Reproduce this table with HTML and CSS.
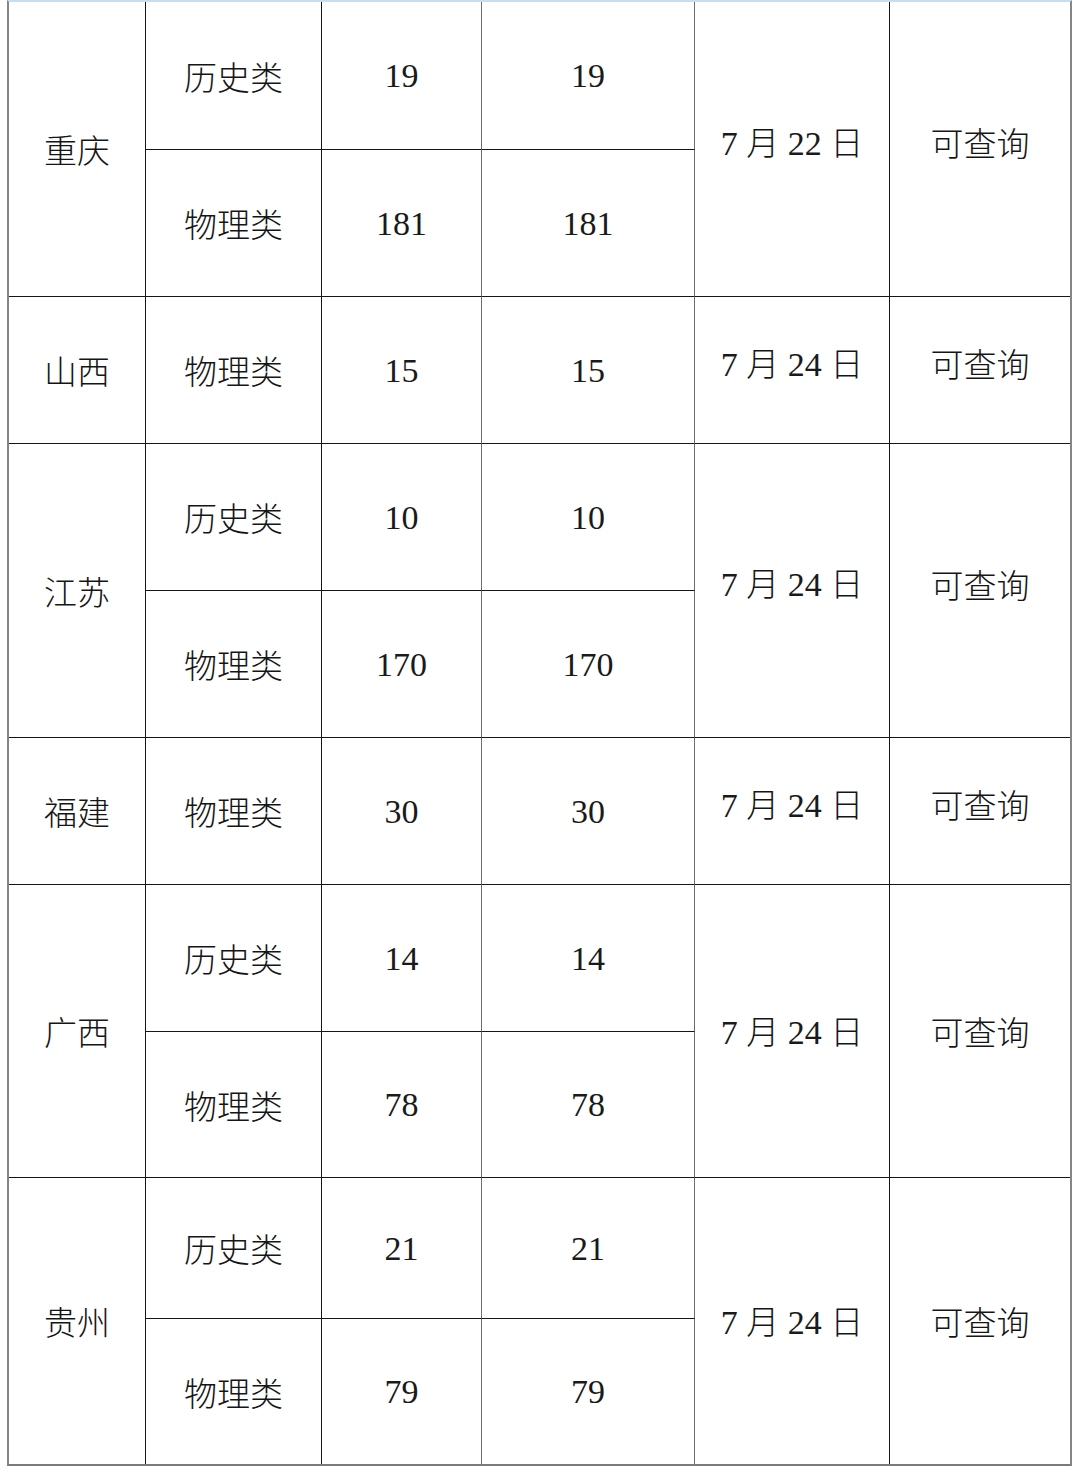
FILE: index.html
```html
<!DOCTYPE html>
<html>
<head>
<meta charset="utf-8">
<title>查询表</title>
<link rel="stylesheet" href="styles.css">
</head>
<body>
<table class="grid">
  <colgroup>
    <col class="c1"><col class="c2"><col class="c3"><col class="c4"><col class="c5"><col class="c6">
  </colgroup>
  <tbody>
    <tr class="r1">
      <td rowspan="2" class="k">重庆</td>
      <td class="k">历史类</td><td class="g"><span class="n">19</span></td><td class="g"><span class="n">19</span></td>
      <td rowspan="2" class="raise k"><span class="n">7 </span>月<span class="n"> 22 </span>日</td>
      <td rowspan="2" class="raise k last">可查询</td>
    </tr>
    <tr class="r2">
      <td class="k">物理类</td><td class="g"><span class="n">181</span></td><td class="g"><span class="n">181</span></td>
    </tr>
    <tr class="r3">
      <td class="k">山西</td>
      <td class="k">物理类</td><td class="g"><span class="n">15</span></td><td class="g"><span class="n">15</span></td>
      <td class="raise k"><span class="n">7 </span>月<span class="n"> 24 </span>日</td>
      <td class="raise k last">可查询</td>
    </tr>
    <tr class="r4">
      <td rowspan="2" class="k">江苏</td>
      <td class="k">历史类</td><td class="g"><span class="n">10</span></td><td class="g"><span class="n">10</span></td>
      <td rowspan="2" class="raise k"><span class="n">7 </span>月<span class="n"> 24 </span>日</td>
      <td rowspan="2" class="raise k last">可查询</td>
    </tr>
    <tr class="r5">
      <td class="k">物理类</td><td class="g"><span class="n">170</span></td><td class="g"><span class="n">170</span></td>
    </tr>
    <tr class="r6">
      <td class="k">福建</td>
      <td class="k">物理类</td><td class="g"><span class="n">30</span></td><td class="g"><span class="n">30</span></td>
      <td class="raise k"><span class="n">7 </span>月<span class="n"> 24 </span>日</td>
      <td class="raise k last">可查询</td>
    </tr>
    <tr class="r7">
      <td rowspan="2" class="k">广西</td>
      <td class="k">历史类</td><td class="g"><span class="n">14</span></td><td class="g"><span class="n">14</span></td>
      <td rowspan="2" class="k"><span class="n">7 </span>月<span class="n"> 24 </span>日</td>
      <td rowspan="2" class="k last">可查询</td>
    </tr>
    <tr class="r8">
      <td class="k">物理类</td><td class="g"><span class="n">78</span></td><td class="g"><span class="n">78</span></td>
    </tr>
    <tr class="r9">
      <td rowspan="2" class="k bottom">贵州</td>
      <td class="k">历史类</td><td class="g"><span class="n">21</span></td><td class="g"><span class="n">21</span></td>
      <td rowspan="2" class="k bottom"><span class="n">7 </span>月<span class="n"> 24 </span>日</td>
      <td rowspan="2" class="k bottom last">可查询</td>
    </tr>
    <tr class="r10">
      <td class="k bottom">物理类</td><td class="g bottom"><span class="n">79</span></td><td class="g bottom"><span class="n">79</span></td>
    </tr>
  </tbody>
</table>
</body>
</html>
```

FILE: styles.css
```css
html, body {
  margin: 0;
  padding: 0;
  background: #ffffff;
}

body {
  padding-left: 7px;
}

.grid {
  border-collapse: separate;
  border-spacing: 0;
  table-layout: fixed;
  width: 1065px;
  border-left: 2px solid #858585;
  border-right: 2px solid #858585;
  border-top: 2px solid #c9dcf0;
  border-bottom: 2px solid #7b7b7b;
  font-family: "Noto Sans CJK SC", sans-serif;
  font-size: 33px;
  font-weight: 300;
  color: #151515;
}

.n {
  font-family: "Liberation Serif", Tinos, "Times New Roman", "DejaVu Serif", serif;
  font-weight: 400;
  font-size: 34px;
  color: #1a1a1a;
  white-space: pre;
}

.c1 { width: 137px; }
.c2 { width: 176px; }
.c3 { width: 160px; }
.c4 { width: 213px; }
.c5 { width: 195px; }
.c6 { width: 180px; }

.grid td {
  padding: 0;
  text-align: center;
  vertical-align: middle;
  line-height: 1.2;
  border-right: 1px solid #161616;
  border-bottom: 1px solid #161616;
  white-space: nowrap;
}

.grid td.k {
  padding-top: 2px;
}

.grid td.g {
  border-right-color: #6c6c6c;
}

.grid td.last {
  border-right: none;
}

.grid td.bottom {
  border-bottom: none;
}

.grid td.raise {
  padding-top: 0;
  padding-bottom: 12px;
}

.r1 { height: 148px; }
.r2, .r3, .r4, .r5, .r6, .r7 { height: 147px; }
.r8 { height: 146px; }
.r9 { height: 141px; }
.r10 { height: 145px; }
```
